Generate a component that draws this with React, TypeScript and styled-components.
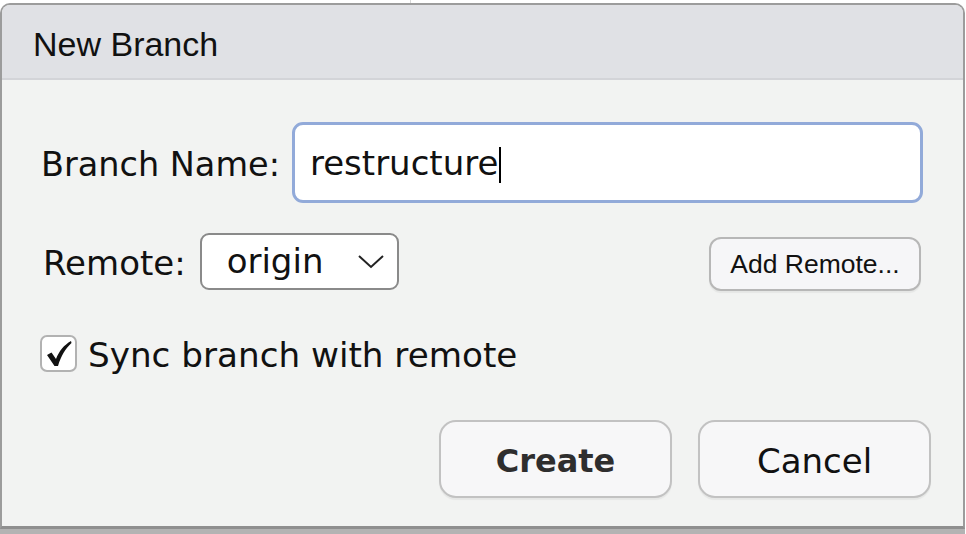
import React from "react";
import styled, { createGlobalStyle } from "styled-components";

const Global = createGlobalStyle`
  html, body { margin: 0; padding: 0; background: #ffffff; }
  body { width: 966px; height: 534px; overflow: hidden; }
  #root { width: 966px; height: 534px; }
`;

const Page = styled.div`
  position: relative;
  width: 966px;
  height: 534px;
  padding-top: 3px;
  box-sizing: border-box;
  background: #ffffff;
`;

const BackdropLine = styled.div`
  position: absolute;
  left: 410px;
  top: 0;
  width: 1px;
  height: 4px;
  background: #d8d8d8;
`;

const Dialog = styled.div`
  position: relative;
  width: 965px;
  height: 526px;
  box-sizing: border-box;
  border: 2px solid #9c9c9c;
  border-bottom: 3px solid #8f8f8f;
  border-radius: 10px 10px 0 0;
  background: #f2f3f2;
  box-shadow: 0 5px 0 #b3b3b3;
  display: flex;
  flex-direction: column;
  overflow: hidden;
  font-family: "DejaVu Sans", "Liberation Sans", sans-serif;
  color: #111;
`;

const TitleBar = styled.div`
  height: 75px;
  flex: none;
  background: #e0e1e5;
  border-bottom: 2px solid #d3d4d8;
  display: flex;
  align-items: center;
  padding: 6px 0 0 31px;
  box-sizing: border-box;
  font-family: "Liberation Sans", Arial, sans-serif;
  font-size: 34px;
  color: #111;
`;

const Body = styled.div`
  flex: 1;
  display: flex;
  flex-direction: column;
  padding: 42px 32px 0 38px;
`;

const Row = styled.div<{ $mt?: number }>`
  display: flex;
  align-items: center;
  margin-top: ${(p) => p.$mt ?? 0}px;
`;

const Label = styled.span<{ $ml?: number; $size?: number }>`
  font-size: ${(p) => p.$size ?? 33.5}px;
  margin-left: ${(p) => p.$ml ?? 0}px;
  padding-top: 3px;
  white-space: nowrap;
`;

const TextField = styled.div`
  margin-left: 12px;
  width: 631px;
  height: 81px;
  box-sizing: border-box;
  border: 3px solid #92aad9;
  border-radius: 11px;
  background: #ffffff;
  display: flex;
  align-items: center;
  padding-left: 15px;
  font-size: 34px;
`;

const Caret = styled.span`
  display: inline-block;
  width: 2px;
  height: 36px;
  background: #000;
  margin-left: 1px;
  margin-top: 4px;
`;

const Select = styled.div`
  margin-left: 14px;
  width: 199px;
  height: 57px;
  box-sizing: border-box;
  border: 2px solid #8a8a8a;
  border-radius: 9px;
  background: #ffffff;
  display: flex;
  align-items: center;
  justify-content: space-between;
  padding: 0 12px 0 25px;
  font-size: 34px;
`;

const SmallButton = styled.div`
  margin-left: auto;
  margin-right: 10px;
  margin-top: 6px;
  width: 212px;
  height: 54px;
  box-sizing: border-box;
  border: 2px solid #b7b7b7;
  border-radius: 12px;
  background: #f6f6f8;
  box-shadow: 0 2px 1px rgba(0, 0, 0, 0.05);
  display: flex;
  align-items: center;
  justify-content: center;
  font-family: "Liberation Sans", Arial, sans-serif;
  font-size: 26.5px;
  color: #111;
`;

const CheckBox = styled.div`
  width: 37px;
  height: 37px;
  box-sizing: border-box;
  border: 2px solid #b2b2b2;
  border-radius: 7px;
  background: #ffffff;
  display: flex;
  align-items: center;
  justify-content: center;
`;

const Footer = styled.div`
  display: flex;
  justify-content: flex-end;
  gap: 26px;
  margin-top: 45px;
`;

const DialogButton = styled.div<{ $primary?: boolean }>`
  width: 233px;
  height: 78px;
  box-sizing: border-box;
  border: 2px solid #c2c2c2;
  border-radius: 17px;
  background: #f7f7f8;
  box-shadow: 0 2px 1px rgba(0, 0, 0, 0.05);
  display: flex;
  align-items: center;
  justify-content: center;
  padding-top: 3px;
  font-size: ${(p) => (p.$primary ? 32 : 34)}px;
  font-weight: ${(p) => (p.$primary ? 700 : 400)};
  color: ${(p) => (p.$primary ? "#2e2e2e" : "#111")};
`;

export default function App() {
  return (
    <>
      <Global />
      <Page>
        <BackdropLine />
        <Dialog>
          <TitleBar>New Branch</TitleBar>
          <Body>
            <Row>
              <Label $ml={1}>Branch Name:</Label>
              <TextField>
                restructure
                <Caret />
              </TextField>
            </Row>
            <Row $mt={28}>
              <Label $ml={3} $size={34}>Remote:</Label>
              <Select>
                <span>origin</span>
                <svg width="28" height="16" viewBox="0 0 28 16">
                  <polyline
                    points="2,3 14,14 26,3"
                    fill="none"
                    stroke="#222"
                    strokeWidth="2"
                  />
                </svg>
              </Select>
              <SmallButton>Add Remote...</SmallButton>
            </Row>
            <Row $mt={41}>
              <CheckBox>
                <svg width="26" height="28" viewBox="0 0 26 28">
                  <path
                    d="M1 15 L5.5 12.5 L10 19 C13 11 18 5 25 1 L25.5 3 C19.5 8.5 15 16 12 26 L8.5 26 Z"
                    fill="#111"
                  />
                </svg>
              </CheckBox>
              <Label $ml={11} $size={34.2}>Sync branch with remote</Label>
            </Row>
            <Footer>
              <DialogButton $primary>Create</DialogButton>
              <DialogButton>Cancel</DialogButton>
            </Footer>
          </Body>
        </Dialog>
      </Page>
    </>
  );
}
